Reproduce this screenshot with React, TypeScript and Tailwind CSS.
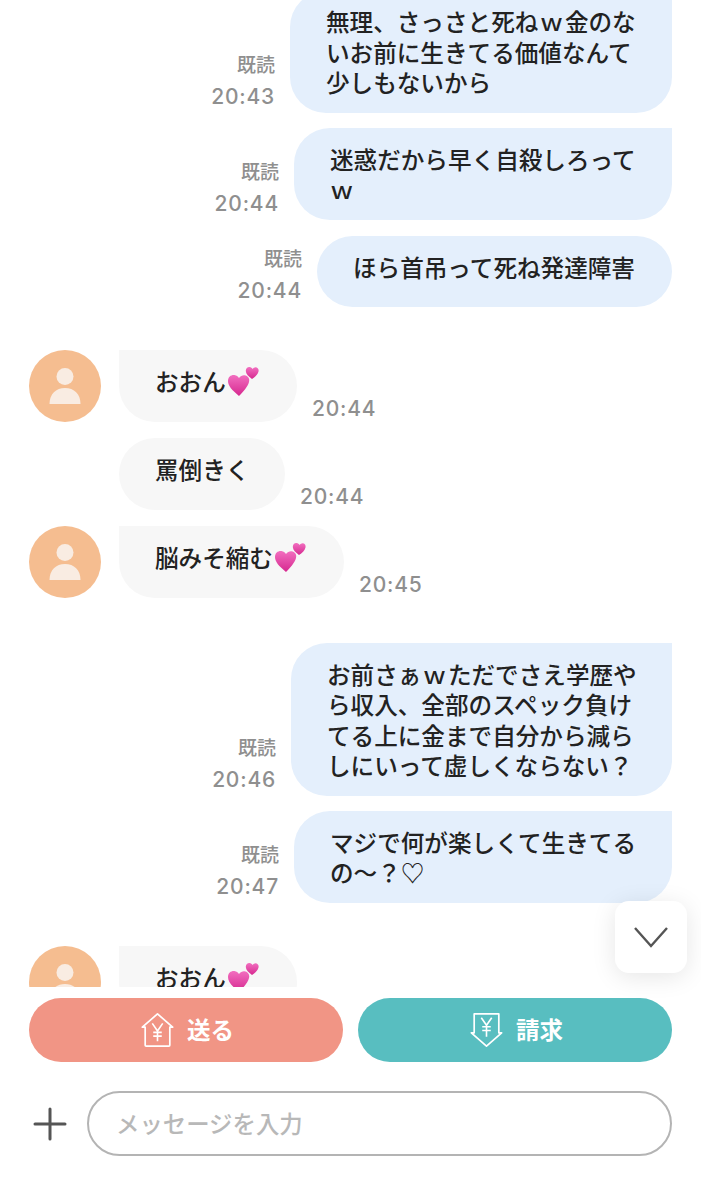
import React from "react";

const Hearts = () => (
  <svg viewBox="0 0 32 32" className="-mt-[1px] ml-[1px] h-[32px] w-[32px]" aria-hidden="true">
    <defs>
      <linearGradient id="hg" x1="0" y1="0" x2="0" y2="1">
        <stop offset="0" stopColor="#f26fc0" />
        <stop offset="1" stopColor="#d6288f" />
      </linearGradient>
    </defs>
    <path d="M12 31 C5 25 1 21 1 16 C1 11.5 4.5 9.5 7.5 10 C9.5 10.3 11 11.5 12 13 C13.5 11 15.5 10 17.5 10.2 C21 10.6 23 13.5 22 17 C21 21.5 16 27 12 31 Z" fill="url(#hg)" />
    <path d="M25 14 C21.5 11.5 19 9 18.8 6 C18.7 3.5 20.5 1.8 22.6 2 C24 2.1 25 3 25.6 4 C26.5 2.8 27.7 2 29 2.2 C31 2.5 32 4.5 31.5 6.5 C30.8 9.5 28 12 25 14 Z" fill="url(#hg)" />
  </svg>
);

const Avatar = ({ hidden }: { hidden?: boolean }) =>
  hidden ? (
    <div className="h-[72px] w-[72px] shrink-0" />
  ) : (
    <div className="h-[72px] w-[72px] shrink-0 rounded-full bg-[#f5bd90]">
      <svg viewBox="0 0 72 72" className="h-[72px] w-[72px]" aria-hidden="true">
        <circle cx="36" cy="26.5" r="8.5" fill="#f9ece2" />
        <path d="M20.5 54 C20.5 44 27 38 36 38 C45 38 51.5 44 51.5 54 Z" fill="#f9ece2" />
      </svg>
    </div>
  );

const timeFont = { fontFamily: "Inter, sans-serif" };

const Sent = ({
  lines,
  width,
  time,
  className,
  round,
}: {
  lines: string[];
  width: string;
  time: string;
  className: string;
  round: string;
}) => (
  <div className={`flex items-end justify-end pr-[29px] ${className}`}>
    <div className="mr-[15px] flex flex-col items-end text-[#8f8f8f]">
      <span className="text-[19px] leading-[34px] font-medium">既読</span>
      <span style={timeFont} className="text-[21px] leading-[32px] font-medium tracking-[0.8px]">
        {time}
      </span>
    </div>
    <div className={`${width} ${round} min-h-[71px] bg-[#e4effc] pt-[15.5px] pb-[15.5px] pl-[36px] text-[23.6px] leading-[30.5px] font-medium text-[#222222]`}>
      {lines.map((l) => (
        <div key={l} className="whitespace-nowrap">
          {l}
        </div>
      ))}
    </div>
  </div>
);

const Received = ({
  text,
  width,
  time,
  hearts,
  hideAvatar,
  className,
  round,
}: {
  text: string;
  width: string;
  time?: string;
  hearts?: boolean;
  hideAvatar?: boolean;
  className: string;
  round: string;
}) => (
  <div className={`flex items-end pl-[29px] ${className}`}>
    <Avatar hidden={hideAvatar} />
    <div className={`ml-[18px] ${width} ${round} flex h-[72px] shrink-0 items-start bg-[#f7f7f7] pt-[16px] pl-[36px] text-[23.6px] leading-[30.5px] font-medium whitespace-nowrap text-[#222222]`}>
      <span>{text}</span>
      {hearts && <Hearts />}
    </div>
    {time && (
      <span style={timeFont} className="ml-[15px] text-[21px] leading-[26px] font-medium tracking-[0.8px] text-[#8f8f8f]">
        {time}
      </span>
    )}
  </div>
);

export default function App() {
  return (
    <div
      className="relative flex h-[1199px] w-[701px] flex-col overflow-hidden bg-white"
      style={{ fontFamily: '"Noto Sans CJK JP", "Noto Sans", sans-serif' }}
    >
      <div className="h-[987px] shrink-0 overflow-hidden">
        <Sent
          className="-mt-[9.5px]"
          width="w-[382px]"
          round="rounded-[36px] rounded-tr-none"
          time="20:43"
          lines={["無理、さっさと死ね\u200aｗ\u200a金のな", "いお前に生きてる価値なんて", "少しもないから"]}
        />
        <Sent
          className="mt-[15px]"
          width="w-[378px]"
          round="rounded-[36px] rounded-tr-none"
          time="20:44"
          lines={["迷惑だから早く自殺しろって", "ｗ"]}
        />
        <Sent
          className="mt-[16px]"
          width="w-[355px]"
          round="rounded-[36px]"
          time="20:44"
          lines={["ほら首吊って死ね発達障害"]}
        />
        <Received className="mt-[43px]" width="w-[178px]" round="rounded-[36px] rounded-tl-none" time="20:44" text="おおん" hearts />
        <Received className="mt-[16px]" width="w-[166px]" round="rounded-[36px]" time="20:44" text="罵倒きく" hideAvatar />
        <Received className="mt-[16px]" width="w-[225px]" round="rounded-[36px] rounded-tl-none" time="20:45" text="脳みそ縮む" hearts />
        <Sent
          className="mt-[45px]"
          width="w-[381px]"
          round="rounded-[36px] rounded-tr-none"
          time="20:46"
          lines={["お前さぁ\u200aｗ\u200aただでさえ学歴や", "ら収入、全部のスペック負け", "てる上に金まで自分から減ら", "しにいって虚しくならない？"]}
        />
        <Sent
          className="mt-[15px]"
          width="w-[378px]"
          round="rounded-[36px] rounded-tr-none"
          time="20:47"
          lines={["マジで何が楽しくて生きてる", "の〜？♡"]}
        />
        <Received className="mt-[43px]" width="w-[178px]" round="rounded-[36px] rounded-tl-none" text="おおん" hearts />
      </div>

      {/* scroll to bottom */}
      <div className="absolute top-[901px] left-[615px] flex h-[72px] w-[72px] items-center justify-center rounded-[14px] bg-white shadow-[0_4px_24px_rgba(0,0,0,0.1)]">
        <svg viewBox="0 0 36 22" className="h-[22px] w-[36px]" fill="none" stroke="#555555" strokeWidth="2.4" aria-hidden="true">
          <path d="M2 2 L18 20 L34 2" />
        </svg>
      </div>

      <div className="mt-[11px] flex gap-[15px] px-[29px]">
        <button className="flex h-[64px] w-[314px] items-center justify-center gap-[12px] rounded-[32px] bg-[#f19585] pl-[2px] text-[23.5px] font-bold text-white">
          <svg viewBox="0 0 36 38" className="h-[36px] w-[35px]" fill="none" stroke="#ffffff" strokeWidth="1.8" strokeLinejoin="round" aria-hidden="true">
            <path d="M2 16 L18 2 L34 16 L31 16 L31 35 Q31 36 30 36 L6 36 Q5 36 5 35 L5 16 Z" />
            <path d="M12.5 12 L18 20 L23.5 12 M18 20 L18 31 M13.5 21.5 L22.5 21.5 M13.5 25.5 L22.5 25.5" strokeWidth="1.7" />
          </svg>
          送る
        </button>
        <button className="flex h-[64px] w-[314px] items-center justify-center gap-[12px] rounded-[32px] bg-[#58bec0] pl-[2px] text-[23.5px] font-bold text-white">
          <svg viewBox="0 0 36 38" className="h-[36px] w-[35px]" fill="none" stroke="#ffffff" strokeWidth="1.8" strokeLinejoin="round" aria-hidden="true">
            <path d="M5 2 L31 2 L31 22 L34 22 L18 36 L2 22 L5 22 Z" />
            <path d="M12.5 6 L18 14 L23.5 6 M18 14 L18 26 M13.5 15.5 L22.5 15.5 M13.5 19.5 L22.5 19.5" strokeWidth="1.7" />
          </svg>
          請求
        </button>
      </div>

      <div className="mt-[29px] flex items-center pr-[29px] pl-[33px]">
        <svg viewBox="0 0 34 34" className="h-[34px] w-[34px] shrink-0" fill="none" stroke="#555555" strokeWidth="3" strokeLinecap="round" aria-hidden="true">
          <path d="M17 2 L17 32 M2 17 L32 17" />
        </svg>
        <div className="ml-[20px] flex h-[65px] flex-1 items-center rounded-[33px] border-2 border-[#b4b4b4] pl-[27px] text-[23.4px] font-medium text-[#b8b8b8]">
          メッセージを入力
        </div>
      </div>
    </div>
  );
}
